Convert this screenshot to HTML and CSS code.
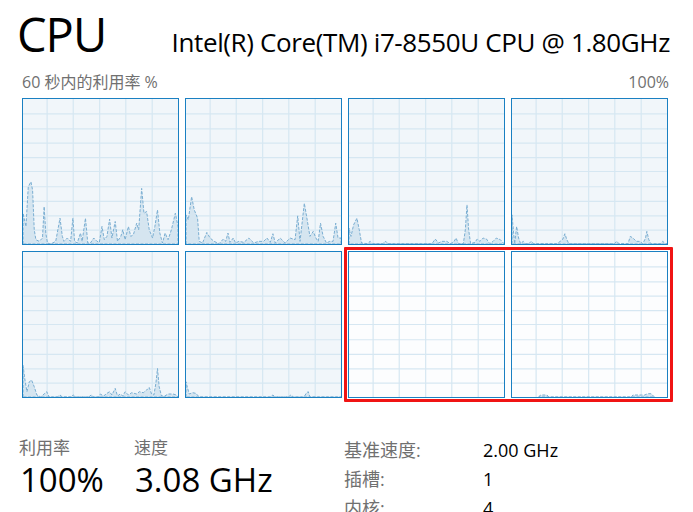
FILE: index.html
```html
<!DOCTYPE html>
<html lang="zh">
<head>
<meta charset="utf-8">
<link rel="stylesheet" href="styles.css">
</head>
<body>
<div class="page">
  <header class="head">
    <h1 class="title">CPU</h1>
    <div class="model">Intel(R) Core(TM) i7-8550U CPU @ 1.80GHz</div>
  </header>
  <div class="subhead">
    <span>60 秒内的利用率 %</span>
    <span>100%</span>
  </div>
  <div class="graphs">
    <div class="graph">
      <svg viewBox="0 0 469 438" preserveAspectRatio="none">
        <g class="grid"><path d="M73 0V438M152 0V438M232 0V438M311 0V438M391 0V438M0 45H469M0 90H469M0 133H469M0 177H469M0 219H469M0 265H469M0 309H469M0 353H469M0 396H469"/></g>
        <path class="area" d="M0 438L0 345L9 385L16 265L24 250L29 275L34 395L39 425L49 430L59 420L64 325L69 405L74 435L84 438L99 430L112 360L119 415L124 430L134 420L144 430L151 360L156 430L164 435L174 405L179 430L189 360L196 435L204 435L214 420L224 430L231 433L239 385L246 425L254 415L262 363L269 420L279 370L286 430L296 415L302 395L309 425L319 385L326 415L334 410L344 375L350 395L359 270L366 345L374 340L382 395L392 420L399 385L407 335L414 405L422 435L430 405L439 425L449 395L461 345L469 385L469 438Z"/>
      </svg>
    </div>
    <div class="graph">
      <svg viewBox="0 0 469 438" preserveAspectRatio="none">
        <g class="grid"><path d="M73 0V438M152 0V438M232 0V438M311 0V438M391 0V438M0 45H469M0 90H469M0 133H469M0 177H469M0 219H469M0 265H469M0 309H469M0 353H469M0 396H469"/></g>
        <path class="area" d="M0 438L0 350L7 365L17 295L25 335L35 360L40 430L50 435L63 403L73 420L85 430L100 437L113 423L120 430L127 405L133 433L143 420L150 435L160 430L175 433L190 420L205 435L220 430L235 430L245 420L255 433L263 407L270 435L285 420L300 435L315 420L330 425L338 353L345 430L358 315L365 355L375 415L385 400L393 420L400 430L407 375L415 415L425 435L435 430L445 430L453 375L460 420L469 420L469 438Z"/>
      </svg>
    </div>
    <div class="graph">
      <svg viewBox="0 0 469 438" preserveAspectRatio="none">
        <g class="grid"><path d="M73 0V438M152 0V438M232 0V438M311 0V438M391 0V438M0 45H469M0 90H469M0 133H469M0 177H469M0 219H469M0 265H469M0 309H469M0 353H469M0 396H469"/></g>
        <path class="area" d="M0 438L0 390L6 415L14 380L24 360L31 395L38 435L56 437L64 430L71 437L101 437L111 430L118 437L251 437L261 423L271 435L281 430L296 430L306 437L316 433L324 420L331 437L346 437L352 395L357 320L362 395L368 437L381 433L388 423L396 430L406 420L416 423L426 437L436 430L446 420L458 425L469 437L469 438Z"/>
      </svg>
    </div>
    <div class="graph">
      <svg viewBox="0 0 469 438" preserveAspectRatio="none">
        <g class="grid"><path d="M73 0V438M152 0V438M232 0V438M311 0V438M391 0V438M0 45H469M0 90H469M0 133H469M0 177H469M0 219H469M0 265H469M0 309H469M0 353H469M0 396H469"/></g>
        <path class="area" d="M0 438L0 350L4 395L8 437L14 385L20 420L26 437L34 430L41 437L51 437L58 430L66 437L136 437L146 430L154 423L160 407L166 425L172 437L311 437L316 430L324 437L351 437L358 415L366 420L376 430L386 430L396 437L404 420L408 400L414 425L420 437L451 437L456 430L464 437L469 437L469 438Z"/>
      </svg>
    </div>
    <div class="graph">
      <svg viewBox="0 0 469 438" preserveAspectRatio="none">
        <g class="grid"><path d="M73 0V438M152 0V438M232 0V438M311 0V438M391 0V438M0 45H469M0 90H469M0 133H469M0 177H469M0 219H469M0 265H469M0 309H469M0 353H469M0 396H469"/></g>
        <path class="area" d="M0 438L0 342L6 387L12 422L19 392L26 387L34 407L42 432L54 438L66 427L72 422L79 438L104 438L112 432L119 438L144 438L152 432L159 438L199 438L206 432L214 438L229 438L234 429L244 435L254 427L262 422L269 432L279 412L286 435L294 429L302 435L309 422L319 432L329 425L344 429L352 422L364 425L374 417L382 409L389 429L396 432L402 397L407 352L412 407L419 435L429 435L439 429L454 429L464 432L469 438Z"/>
      </svg>
    </div>
    <div class="graph">
      <svg viewBox="0 0 469 438" preserveAspectRatio="none">
        <g class="grid"><path d="M73 0V438M152 0V438M232 0V438M311 0V438M391 0V438M0 45H469M0 90H469M0 133H469M0 177H469M0 219H469M0 265H469M0 309H469M0 353H469M0 396H469"/></g>
        <path class="area" d="M0 438L0 392L5 412L10 429L20 425L30 427L40 438L255 438L263 432L270 438L310 438L317 432L325 438L357 438L365 425L370 422L375 438L469 438Z"/>
      </svg>
    </div>
    <div class="graph graph-sel graph-c3">
      <svg viewBox="0 0 469 438" preserveAspectRatio="none">
        <g class="grid"><path d="M73 0V438M152 0V438M232 0V438M311 0V438M391 0V438M0 45H469M0 90H469M0 133H469M0 177H469M0 219H469M0 265H469M0 309H469M0 353H469M0 396H469"/></g>
      </svg>
    </div>
    <div class="graph graph-sel graph-c4">
      <svg viewBox="0 0 469 438" preserveAspectRatio="none">
        <g class="grid"><path d="M73 0V438M152 0V438M232 0V438M311 0V438M391 0V438M0 45H469M0 90H469M0 133H469M0 177H469M0 219H469M0 265H469M0 309H469M0 353H469M0 396H469"/></g>
        <path class="area" d="M81 438L86 432L106 432L111 438L361 438L366 432L391 432L401 432L411 428L421 428L431 438Z"/>
      </svg>
    </div>
    <div class="highlight"></div>
  </div>
  <div class="stats">
    <div class="stat stat-util">
      <div class="label">利用率</div>
      <div class="value">100%</div>
    </div>
    <div class="stat stat-speed">
      <div class="label">速度</div>
      <div class="value">3.08 GHz</div>
    </div>
    <div class="info">
      <div class="row"><span class="key">基准速度:</span><span class="val">2.00 GHz</span></div>
      <div class="row"><span class="key">插槽:</span><span class="val">1</span></div>
      <div class="row"><span class="key">内核:</span><span class="val">4</span></div>
    </div>
  </div>
</div>
</body>
</html>
```
FILE: styles.css
```css
html, body {
  margin: 0;
  padding: 0;
  background: #ffffff;
}
body {
  font-family: "Open Sans", "Noto Sans CJK SC", sans-serif;
  color: #000000;
  overflow: hidden;
  height: 512px;
}
.page {
  width: 693px;
}
.head {
  display: flex;
  align-items: baseline;
  justify-content: space-between;
  padding: 0 23px 0 17px;
  height: 70px;
}
.title {
  margin: 0;
  font-weight: 400;
  font-size: 47px;
  line-height: 68px;
  letter-spacing: -1px;
}
.model {
  font-size: 26px;
  line-height: 30px;
  letter-spacing: -0.37px;
}
.subhead {
  display: flex;
  justify-content: space-between;
  padding: 0 24px 0 22px;
  font-size: 16px;
  line-height: 24px;
  color: #707070;
  height: 28px;
}
.graphs {
  display: grid;
  grid-template-columns: repeat(4, 157px);
  grid-template-rows: 147px 147px;
  gap: 6px;
  margin-left: 22px;
}
.graph {
  box-sizing: border-box;
  border: 1px solid #1a80c2;
  background: #f1f6fa;
  overflow: hidden;
}
.graph-sel {
  background: #fcfdfe;
}
.graph-c3 {
  grid-column: 3;
  grid-row: 2;
}
.graph-c4 {
  grid-column: 4;
  grid-row: 2;
}
.graph svg {
  display: block;
  width: 100%;
  height: 100%;
}
.grid path {
  stroke: #d6e7f2;
  stroke-width: 1.2px;
  vector-effect: non-scaling-stroke;
  fill: none;
}
.area {
  fill: #d5e5f0;
  stroke: #7aaed2;
  stroke-width: 1px;
  stroke-dasharray: 3 1.5;
  vector-effect: non-scaling-stroke;
}
.highlight {
  grid-column: 3 / 5;
  grid-row: 2;
  margin: -4px -5px -4px -4px;
  border: 3px solid #f01414;
  border-radius: 1px;
  pointer-events: none;
}
.stats {
  display: flex;
  align-items: flex-start;
  margin-top: 38px;
}
.stat {
  display: flex;
  flex-direction: column;
}
.stat-util {
  margin-left: 19px;
  width: 115px;
}
.stat-speed {
  width: 210px;
}
.label {
  font-size: 17px;
  line-height: 24px;
  color: #707070;
}
.value {
  font-size: 33px;
  line-height: 40px;
  margin-left: 1px;
}
.info {
  display: flex;
  flex-direction: column;
}
.row {
  display: flex;
  font-size: 18px;
  line-height: 29px;
}
.key {
  width: 139px;
  color: #707070;
}
.val {
  color: #000000;
}
```
